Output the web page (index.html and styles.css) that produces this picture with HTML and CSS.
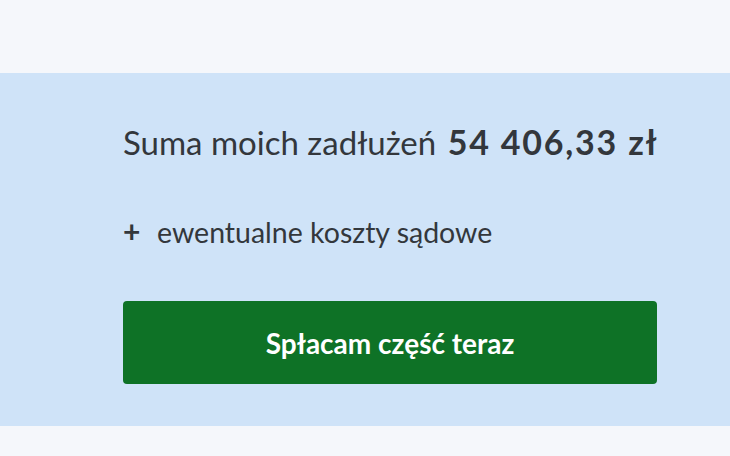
FILE: index.html
```html
<!DOCTYPE html>
<html lang="pl">
<head>
<meta charset="UTF-8">
<meta name="viewport" content="width=device-width, initial-scale=1.0">
<title>Suma zadłużeń</title>
<link rel="stylesheet" href="styles.css">
</head>
<body>

<!-- Top strip -->
<div class="top-strip"></div>

<!-- Debt summary -->
<section class="summary">
  <p class="summary-total">Suma moich zadłużeń <strong>54 406,33 zł</strong></p>
  <p class="summary-extra"><span class="plus">+</span>ewentualne koszty sądowe</p>
  <button class="pay-btn">Spłacam część teraz</button>
</section>

<div class="bottom-strip"></div>

</body>
</html>
```

FILE: styles.css
```css
/* Page */
body {
  margin: 0;
  padding: 0;
  background: #f5f7fb;
  font-family: Lato, 'Noto Sans', sans-serif;
  color: #33373c;
}
.top-strip {
  height: 73px;
  background: #f5f7fb;
}
/* Summary box */
.summary {
  display: flex;
  flex-direction: column;
  align-items: stretch;
  padding: 49px 73px 42px 123px;
  background: #cfe3f8;
}
.summary p {
  margin: 0;
}
.summary-total {
  font-size: 33px;
  line-height: 40px;
  white-space: nowrap;
}
.summary-total strong {
  font-size: 34px;
  font-weight: 700;
  letter-spacing: 1.8px;
  margin-left: 3px;
}
.summary-extra {
  margin-top: 54px !important;
  font-size: 28.5px;
  line-height: 32px;
}
.plus {
  display: inline-block;
  width: 34px;
  font-size: 30px;
  line-height: 1;
  font-weight: 700;
}
.pay-btn {
  margin-top: 53px;
  height: 83px;
  border: none;
  border-radius: 4px;
  background: #0e7226;
  color: #fff;
  font-family: inherit;
  font-size: 28px;
  font-weight: 700;
  cursor: pointer;
}
.bottom-strip {
  height: 40px;
}
```
